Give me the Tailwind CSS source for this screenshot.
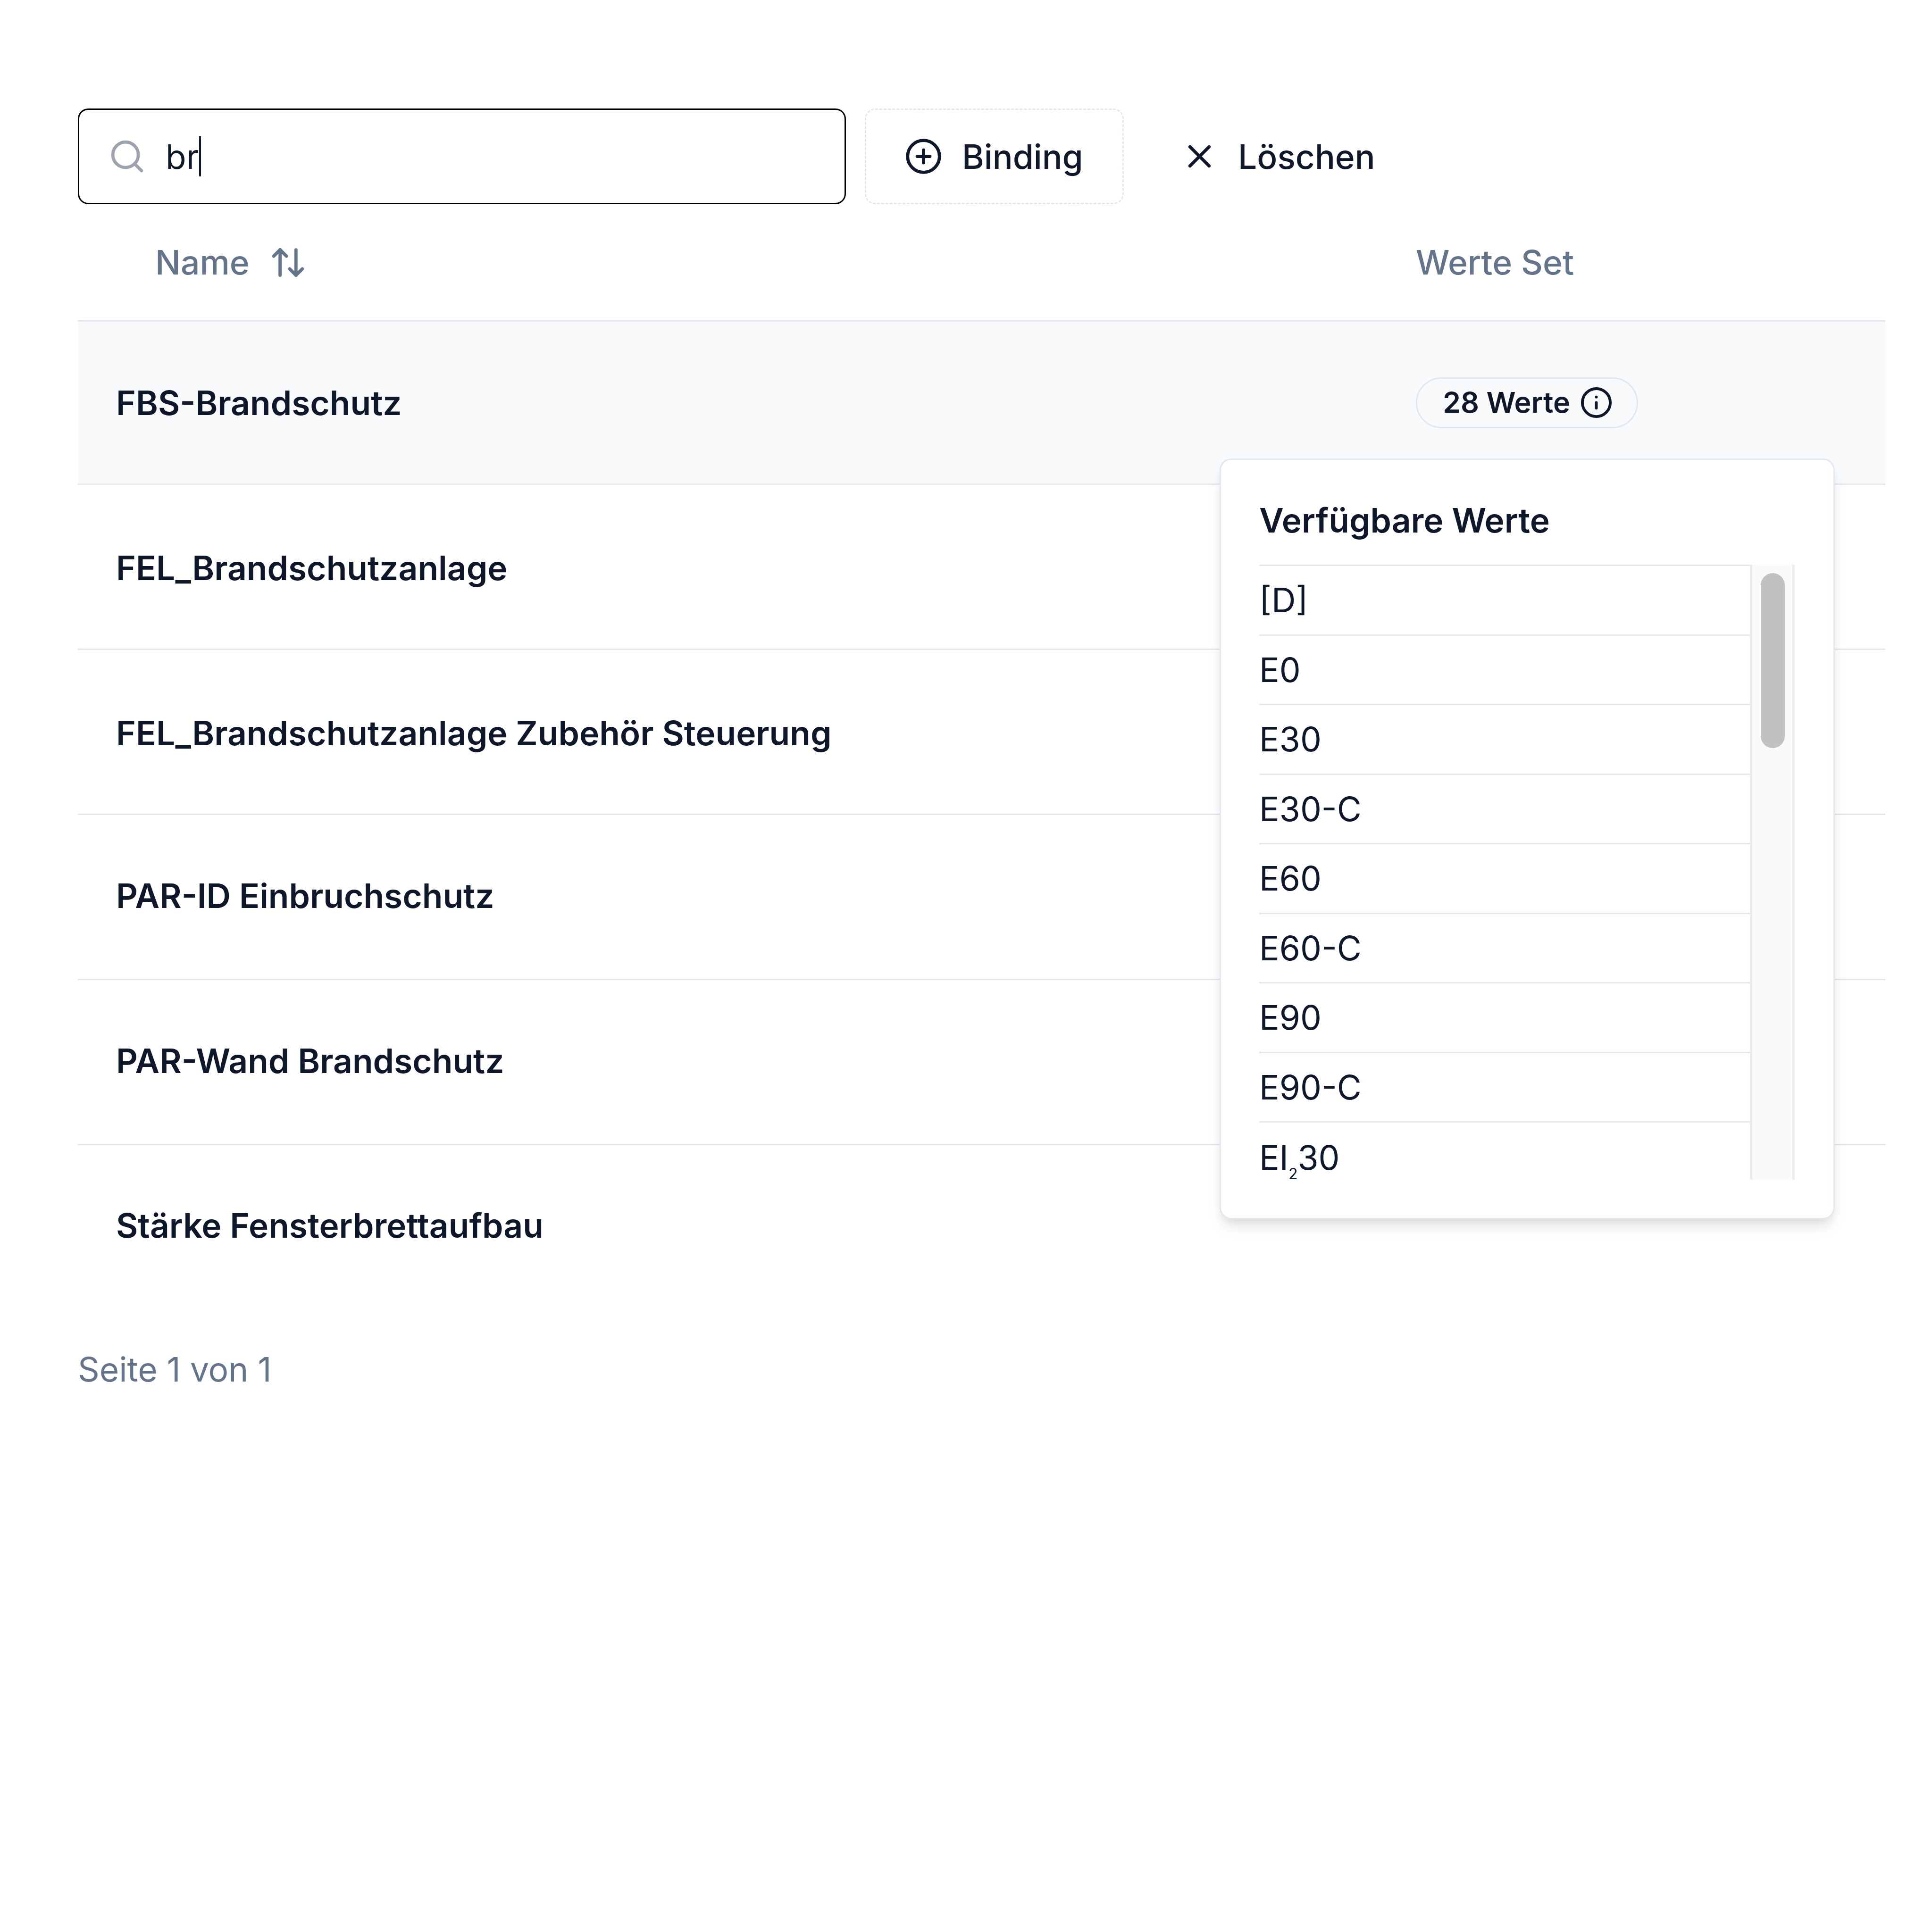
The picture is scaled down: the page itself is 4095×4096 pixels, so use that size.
<!DOCTYPE html>
<html lang="de">
<head>
    <meta charset="UTF-8">
    <title>Werte Set</title>
    <script src="https://cdn.jsdelivr.net/npm/@tailwindcss/browser@4"></script>
</head>
<body class="bg-white text-[#0f172a] font-['Inter',sans-serif] text-[71.3px] leading-[100px]">
    <div class="relative w-[4095px] h-[4096px] pt-[230px] pl-[165px] pr-[99px]">
        <!-- Toolbar -->
        <div class="flex items-center h-[203px]">
            <div class="flex items-center w-[1628px] h-[203px] border-[3px] border-black rounded-[22px] pl-[61px]">
                <svg class="w-[81px] h-[81px] shrink-0 text-[#9ca3af]" viewBox="0 0 24 24" fill="none" stroke="currentColor" stroke-width="2" stroke-linecap="round" stroke-linejoin="round"><circle cx="11" cy="11" r="8"/><path d="m21 21-4.3-4.3"/></svg>
                <span class="ml-[41px]">br</span>
                <span class="w-[4px] h-[85px] bg-[#0f172a]"></span>
            </div>
            <div class="flex items-center w-[549px] h-[203px] ml-[40px] pl-[81px] border-[3px] border-dashed border-[#e2e8f0] rounded-[22px] font-medium">
                <svg class="w-[81px] h-[81px] shrink-0" viewBox="0 0 24 24" fill="none" stroke="currentColor" stroke-width="2" stroke-linecap="round" stroke-linejoin="round"><circle cx="12" cy="12" r="10"/><path d="M8 12h8"/><path d="M12 8v8"/></svg>
                <span class="ml-[41px]">Binding</span>
            </div>
            <div class="flex items-center h-[203px] ml-[120px] font-medium">
                <svg class="w-[81px] h-[81px] shrink-0" viewBox="0 0 24 24" fill="none" stroke="currentColor" stroke-width="2" stroke-linecap="round" stroke-linejoin="round"><path d="M18 6 6 18"/><path d="m6 6 12 12"/></svg>
                <span class="ml-[41px]">Löschen</span>
            </div>
        </div>

        <!-- Table head -->
        <div class="grid grid-cols-[2836px_1fr] h-[246px] items-center text-[#64748b] font-medium">
            <div class="flex items-center pl-[164px]">
                <span>Name</span>
                <svg class="w-[81px] h-[81px] ml-[41px]" viewBox="0 0 24 24" fill="none" stroke="currentColor" stroke-width="2" stroke-linecap="round" stroke-linejoin="round"><path d="m21 16-4 4-4-4"/><path d="M17 20V4"/><path d="m3 8 4-4 4 4"/><path d="M7 4v16"/></svg>
            </div>
            <div>Werte Set</div>
        </div>

        <!-- Rows -->
        <div class="border-t-[3px] border-[#e2e8f0] font-semibold">
            <div class="grid grid-cols-[2836px_1fr] items-center h-[346px] pl-[81px] border-b-[3px] border-[#e2e8f0] bg-[#f8fafc]">
                <div>FBS-Brandschutz</div>
                <div class="-ml-[81px]">
                    <span class="inline-flex items-center h-[108px] w-[471px] pl-[54px] border-[3px] border-[#e2e8f0] rounded-full text-[61px] leading-none font-semibold">
                        28 Werte
                        <svg class="w-[71px] h-[71px] ml-[20px]" viewBox="0 0 24 24" fill="none" stroke="currentColor" stroke-width="2" stroke-linecap="round" stroke-linejoin="round"><circle cx="12" cy="12" r="10"/><path d="M12 16v-4"/><path d="M12 8h.01"/></svg>
                    </span>
                </div>
            </div>
            <div class="flex items-center h-[350px] pl-[81px] pt-[5px] border-b-[3px] border-[#e2e8f0]">FEL_Brandschutzanlage</div>
            <div class="flex items-center h-[350px] pl-[81px] pt-[5px] border-b-[3px] border-[#e2e8f0]">FEL_Brandschutzanlage Zubehör Steuerung</div>
            <div class="flex items-center h-[350px] pl-[81px] pb-[5px] border-b-[3px] border-[#e2e8f0]">PAR-ID Einbruchschutz</div>
            <div class="flex items-center h-[350px] pl-[81px] pb-[5px] border-b-[3px] border-[#e2e8f0]">PAR-Wand Brandschutz</div>
            <div class="flex items-center h-[350px] pl-[81px] pb-[10px]">Stärke Fensterbrettaufbau</div>
        </div>

        <div class="mt-[75px] text-[#64748b]">Seite 1 von 1</div>

        <!-- Werte popover -->
        <div class="absolute left-[2585px] top-[972px] w-[1304px] px-[81px] pt-[78px] pb-[81px] bg-white border-[3px] border-[#e2e8f0] rounded-[25px] shadow-[0_20px_30px_-5px_rgba(0,0,0,0.1),0_10px_20px_-10px_rgba(0,0,0,0.1)]">
            <div class="h-[100px] mb-[44px] font-semibold">Verfügbare Werte</div>
            <div class="flex h-[1304px] overflow-hidden">
                <div class="w-[1040px] border-t-[3px] border-[#e2e8f0]">
                    <div class="flex items-center h-[147.5px] border-b-[3px] border-[#e2e8f0]">[D]</div>
                    <div class="flex items-center h-[147.5px] border-b-[3px] border-[#e2e8f0]">E0</div>
                    <div class="flex items-center h-[147.5px] border-b-[3px] border-[#e2e8f0]">E30</div>
                    <div class="flex items-center h-[147.5px] border-b-[3px] border-[#e2e8f0]">E30-C</div>
                    <div class="flex items-center h-[147.5px] border-b-[3px] border-[#e2e8f0]">E60</div>
                    <div class="flex items-center h-[147.5px] border-b-[3px] border-[#e2e8f0]">E60-C</div>
                    <div class="flex items-center h-[147.5px] border-b-[3px] border-[#e2e8f0]">E90</div>
                    <div class="flex items-center h-[147.5px] border-b-[3px] border-[#e2e8f0]">E90-C</div>
                    <div class="h-[147.5px] pt-[24px] leading-[100px]">EI<sub class="text-[32px] bottom-[-20px]">2</sub>30</div>
                </div>
                <div class="w-[95px] pt-[18px] pl-[18px] pr-[16px] bg-[#fafafa] border-x-[5px] border-[#ececec]">
                    <div class="h-[371px] bg-[#c1c1c1] rounded-full"></div>
                </div>
            </div>
        </div>
    </div>
</body>
</html>
